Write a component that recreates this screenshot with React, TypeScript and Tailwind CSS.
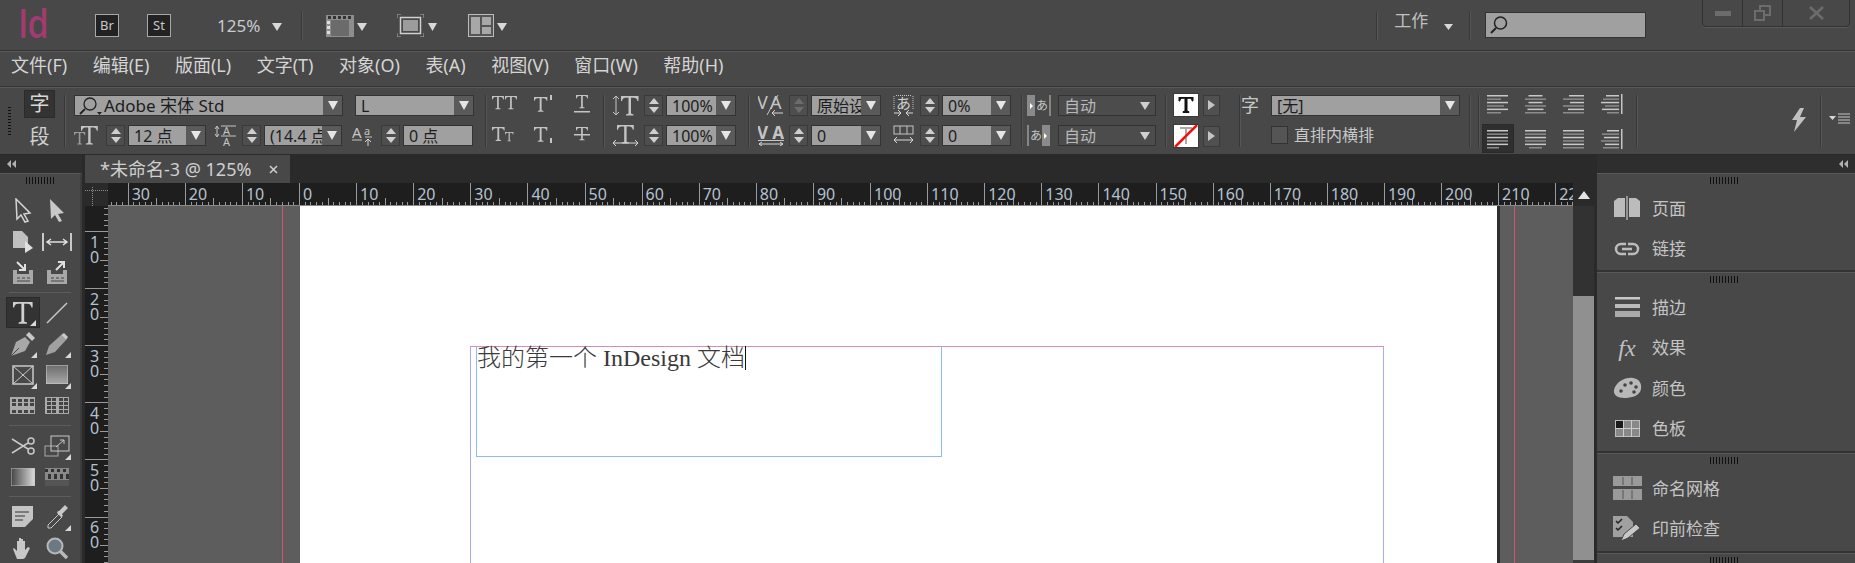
import type { ReactNode } from 'react'

// Gripper made of short dark bars, shared by every docked panel
function Gripper() {
  return (
    <svg width="28" height="7" className="block">
      {Array.from({ length: 10 }, (_, i) => (
        <rect key={i} x={i * 3} y="0" width="1" height="7" fill="#111" />
      ))}
    </svg>
  )
}

function Caret({ className = '', color = '#d8d8d8', w = 10, h = 8 }: { className?: string; color?: string; w?: number; h?: number }) {
  return (
    <svg width={w} height={h} viewBox="0 0 10 8" className={`block shrink-0 ${className}`} preserveAspectRatio="none">
      <path d="M0 0h10L5 8z" fill={color} />
    </svg>
  )
}

function Divider({ className = '' }: { className?: string }) {
  return <div className={`w-px shrink-0 bg-[#383838] border-r border-[#565656] box-content ${className}`} />
}

function Spinner({ dim = false, className = '' }: { dim?: boolean; className?: string }) {
  const c = dim ? '#6c6c6c' : '#cfcfcf'
  return (
    <div className={`w-[19px] h-[21px] shrink-0 flex flex-col items-center justify-center gap-[3px] bg-[#4e4e4e] border border-[#3a3a3a] ${className}`}>
      <svg width="10" height="6" className="block"><path d="M0 6L5 0l5 6z" fill={c} /></svg>
      <svg width="10" height="6" className="block"><path d="M0 0h10L5 6z" fill={c} /></svg>
    </div>
  )
}

function Field({ text, className = '', arrowW = 19, mono = false }: { text?: string; className?: string; arrowW?: number; mono?: boolean }) {
  return (
    <div className={`h-[21px] flex shrink-0 border border-[#333] ${className}`}>
      <div className="flex-1 min-w-0 bg-[#a0a0a0] overflow-hidden whitespace-nowrap text-[#1d1d1d] text-[16px] leading-[20px] pl-[5px]">
        {text}
      </div>
      {!mono && (
        <div className="bg-[#5a5a5a] flex items-center justify-center shrink-0" style={{ width: arrowW }}>
          <Caret color="#e6e6e6" w={10} h={9} />
        </div>
      )}
    </div>
  )
}

function DarkSelect({ text, className = '' }: { text: string; className?: string }) {
  return (
    <div className={`h-[21px] flex items-center justify-between shrink-0 bg-[#4c4c4c] border border-[#333] text-[#b8b8b8] text-[16px] pl-[5px] pr-[5px] ${className}`}>
      <span>{text}</span>
      <Caret color="#cfcfcf" w={10} h={8} />
    </div>
  )
}

function Glyph({ w, h = 21, children, className = '' }: { w: number; h?: number; children: ReactNode; className?: string }) {
  return (
    <svg width={w} height={h} viewBox={`0 0 ${w} ${h}`} className={`block shrink-0 ${className}`} fill="none">
      {children}
    </svg>
  )
}

// Serif "T" used all over the type controls
function SerifT({ x, y, s = 1, fill = '#c4c4c4', bold = false }: { x: number; y: number; s?: number; fill?: string; bold?: boolean }) {
  return (
    <path
      transform={`translate(${x} ${y}) scale(${s})`}
      d="M0 0h14v4h-.8c-.3-1.500-1-2.700-3-2.700H8V14l2 .7v.8H4v-.8l2-.7V1.300H3.800c-2 0-2.700 1.200-3 2.700H0z"
      fill={fill}
      stroke={bold ? fill : 'none'}
      strokeWidth={bold ? 1 : 0}
    />
  )
}

function AlignIcon({ kind }: { kind: string }) {
  const rows =
    kind === 'l' ? [21, 14, 21, 17, 21, 14]
    : kind === 'c' ? [14, 21, 14, 21, 16, 21]
    : kind === 'r' ? [15, 21, 14, 21, 16, 21]
    : kind === 'j' ? [21, 21, 21, 21, 21, 12]
    : kind === 'jc' ? [21, 21, 21, 21, 21, 13]
    : [21, 21, 21, 21, 21, 21]
  const isTowards = kind === 'sp' || kind === 'sr'
  return (
    <svg width="22" height="20" className="block shrink-0">
      {rows.map((w, i) => {
        const wide = isTowards ? (kind === 'sp' ? [13, 16, 18, 14, 17, 12][i] : [12, 17, 15, 18, 14, 16][i]) : w
        const x = isTowards ? 18 - wide : kind === 'c' || kind === 'jc' ? (21 - wide) / 2 : kind === 'r' ? 21 - wide : 0
        return <rect key={i} x={x} y={i * 3.4 + 1} width={wide} height="1.500" fill={i % 2 ? '#8c8c8c' : '#c8c8c8'} />
      })}
      {isTowards && <rect x="20" y="0" width="1.500" height="20" fill="#c4c4c4" />}
    </svg>
  )
}

function TopBar() {
  return (
    <div className="h-[51px] shrink-0 flex border-b border-[#333] shadow-[0_1px_0_#5a5a5a] relative">
      <div className="ml-[18px] mt-[2px] w-[30px] h-[44px] text-[#a33a70] text-[40px] leading-[42px] font-['Open_Sans',sans-serif] font-semibold tracking-[-1px] scale-x-[0.85] origin-left">
        Id
      </div>
      <div className="ml-[47px] mt-[14px] w-[24px] h-[23px] border border-[#a8a8a8] bg-[#222] text-[#c8c8c8] text-[13px] leading-[21px] text-center">Br</div>
      <div className="ml-[28px] mt-[14px] w-[24px] h-[23px] border border-[#a8a8a8] bg-[#222] text-[#c8c8c8] text-[13px] leading-[21px] text-center">St</div>
      <div className="ml-[46px] mt-[13px] text-[#c8ccd0] text-[17px] leading-[26px]">125%</div>
      <Caret className="ml-[12px] mt-[23px]" />
      <Divider className="ml-[19px] mt-[11px] h-[29px]" />
      {/* view options */}
      <Glyph w={28} h={23} className="ml-[23px] mt-[14px]">
        <rect x="0" y="1" width="28" height="22" fill="#8e8e8e" />
        <rect x="5" y="6" width="18" height="16" fill="#6b6b6b" />
        {[2, 7, 12, 17, 22].map((x) => <rect key={x} x={x} y="2" width="3" height="3" fill="#333" />)}
        {[7, 12, 17].map((y) => <rect key={y} x="1" y={y} width="3" height="3" fill="#ddd" />)}
      </Glyph>
      <Caret className="ml-[3px] mt-[23px]" />
      <Glyph w={27} h={23} className="ml-[30px] mt-[14px]">
        <rect x="3.500" y="3.500" width="20" height="16" stroke="#cfcfcf" strokeWidth="1.500" />
        <rect x="6" y="6" width="15" height="11" fill="#9c9c9c" />
        <path d="M0 4V0h4M23 0h4v4M27 19v4h-4M4 23H0v-4" stroke="#aaa" />
      </Glyph>
      <Caret className="ml-[4px] mt-[23px]" w={9} />
      <Glyph w={26} h={23} className="ml-[31px] mt-[14px]">
        <rect x="0.500" y="0.500" width="25" height="22" fill="#555" stroke="#bbb" />
        <rect x="3" y="3" width="9" height="17" fill="#a8a8a8" />
        <rect x="14" y="3" width="9" height="8" fill="#a8a8a8" />
        <rect x="14" y="13" width="9" height="7" fill="#a8a8a8" />
      </Glyph>
      <Caret className="ml-[3px] mt-[23px]" />

      <Divider className="ml-[869px] mt-[11px] h-[29px]" />
      <div className="ml-[16px] mt-[9px] text-[#c0c0c0] text-[17px] leading-[24px]">工作</div>
      <Caret className="ml-[16px] mt-[24px]" w={9} h={6} />
      <Divider className="ml-[16px] mt-[11px] h-[29px]" />
      <div className="ml-[14px] mt-[12px] w-[161px] h-[26px] bg-[#a0a0a0] border border-[#333] flex items-center pl-[3px]">
        <Glyph w={20} h={20}>
          <circle cx="11.500" cy="8" r="6" stroke="#222" strokeWidth="1.500" />
          <path d="M7 13l-5 5" stroke="#222" strokeWidth="2" />
        </Glyph>
      </div>

      {/* window buttons */}
      <div className="ml-[56px] w-[148px] h-[27px] flex border border-t-0 border-[#333] rounded-b-[4px] shadow-[0_1px_0_#5a5a5a]">
        <div className="w-[40px] flex items-center justify-center border-r border-[#333]">
          <div className="w-[16px] h-[5px] bg-[#6c6c6c]" />
        </div>
        <div className="w-[40px] flex items-center justify-center border-r border-[#333]">
          <Glyph w={17} h={16}>
            <rect x="6" y="1" width="10" height="9" stroke="#6c6c6c" strokeWidth="2" />
            <rect x="1" y="6" width="9" height="9" fill="#484848" stroke="#6c6c6c" strokeWidth="2" />
          </Glyph>
        </div>
        <div className="flex-1 flex items-center justify-center">
          <Glyph w={15} h={14}>
            <path d="M1 1l13 12M14 1L1 13" stroke="#6c6c6c" strokeWidth="2.500" />
          </Glyph>
        </div>
      </div>
    </div>
  )
}

const menus = ['文件(F)', '编辑(E)', '版面(L)', '文字(T)', '对象(O)', '表(A)', '视图(V)', '窗口(W)', '帮助(H)']

function MenuBar() {
  return (
    <div className="h-[36px] shrink-0 flex items-center gap-[25.500px] pl-[11px] pb-[6px] border-b border-[#333] text-[#d4d4d4] text-[18px]">
      {menus.map((m) => (
        <span key={m} className="whitespace-nowrap">{m}</span>
      ))}
    </div>
  )
}

function ControlPanel() {
  return (
    <div className="h-[67px] shrink-0 flex pt-[7px] border-t border-[#595959] border-b-0">
      {/* gripper */}
      <svg width="3" height="30" className="block ml-[8px] mt-[12px] shrink-0">
        {Array.from({ length: 10 }, (_, i) => <rect key={i} y={i * 3} width="3" height="1" fill="#111" />)}
      </svg>
      <div className="ml-[13px] w-[31px] shrink-0">
        <div className="-mt-[5px] h-[28px] bg-[#333] border border-[#2b2b2b] text-[#d8d8d8] text-[20px] leading-[25px] text-center">字</div>
        <div className="mt-[5px] h-[28px] text-[#d0d0d0] text-[20px] leading-[28px] text-center">段</div>
      </div>
      <Divider className="ml-[9px] h-[52px]" />

      {/* font family and size */}
      <div className="ml-[8px] w-[400px] shrink-0 flex flex-col gap-[9px]">
        <div className="flex">
          <div className="w-[269px] h-[21px] flex shrink-0 border border-[#333]">
            <div className="flex-1 bg-[#a0a0a0] flex items-center pl-[3px] text-[#1d1d1d] text-[17px] whitespace-nowrap">
              <Glyph w={24} h={20}>
                <circle cx="12" cy="8" r="6" stroke="#222" strokeWidth="1.300" />
                <path d="M7 13l-5 5" stroke="#222" strokeWidth="1.800" />
                <path d="M19 16h5l-2.500 3z" fill="#222" />
              </Glyph>
              <span className="ml-[2px]">Adobe 宋体 Std</span>
            </div>
            <div className="w-[19px] bg-[#5a5a5a] flex items-center justify-center"><Caret color="#e6e6e6" w={10} h={9} /></div>
          </div>
          <Field text="L" className="ml-[12px] w-[119px]" />
        </div>
        <div className="flex">
          <Glyph w={24}>
            <SerifT x={7} y={1} s={1.200} />
            <SerifT x={0} y={7} s={0.800} fill="#9a9a9a" />
          </Glyph>
          <Spinner className="ml-[8px]" />
          <Field text="12 点" className="ml-[3px] w-[78px]" />
          <Glyph w={22} className="ml-[8px]">
            <path d="M7 1h15M7 11h15" stroke="#c4c4c4" />
            <text x="9" y="10" fontSize="11" fill="#c4c4c4" fontFamily="Noto Sans">A</text>
            <text x="9" y="21" fontSize="11" fill="#c4c4c4" fontFamily="Noto Sans">A</text>
            <path d="M3 2v9M1 4l2-3 2 3M1 9l2 3 2-3" stroke="#c4c4c4" />
          </Glyph>
          <Spinner className="ml-[6px]" />
          <Field text="(14.4 点" className="ml-[3px] w-[78px]" />
          <Glyph w={22} className="ml-[10px]">
            <text x="0" y="13" fontSize="15" fill="#c4c4c4" fontFamily="Noto Sans">A</text>
            <text x="12" y="10" fontSize="11" fill="#c4c4c4" fontFamily="Noto Sans">a</text>
            <path d="M0 15h10M13 12h7" stroke="#c4c4c4" />
            <path d="M16 21v-7M13 17l3-3 3 3" stroke="#d8d8d8" />
          </Glyph>
          <Spinner className="ml-[7px]" />
          <Field text="0 点" mono className="ml-[3px] w-[70px]" />
        </div>
      </div>
      <Divider className="ml-[11px] h-[52px]" />

      {/* case, super/subscript */}
      <div className="ml-[5px] w-[96px] shrink-0 flex flex-col gap-[11px]">
        <div className="flex items-start h-[20px]">
          <Glyph w={26} h={18}><SerifT x={0} y={1} s={0.850} /><SerifT x={13} y={1} s={0.850} /></Glyph>
          <Glyph w={20} h={18} className="ml-[16px]"><SerifT x={0} y={2} s={0.950} /><rect x="16" y="0" width="2" height="5" fill="#c4c4c4" /></Glyph>
          <Glyph w={16} h={18} className="ml-[20px]"><SerifT x={2} y={0} s={0.850} /><rect x="0" y="16" width="16" height="1.500" fill="#c4c4c4" /></Glyph>
        </div>
        <div className="flex items-start h-[20px]">
          <Glyph w={26} h={18}><SerifT x={0} y={1} s={0.900} /><SerifT x={13} y={6} s={0.600} /></Glyph>
          <Glyph w={20} h={18} className="ml-[16px]"><SerifT x={0} y={1} s={0.950} /><rect x="16" y="12" width="2" height="5" fill="#c4c4c4" /></Glyph>
          <Glyph w={16} h={18} className="ml-[20px]"><SerifT x={2} y={1} s={0.850} /><rect x="0" y="8" width="16" height="1.500" fill="#c4c4c4" /></Glyph>
        </div>
      </div>
      <Divider className="ml-[15px] h-[52px]" />

      {/* scale */}
      <div className="ml-[7px] w-[123px] shrink-0 flex flex-col gap-[9px]">
        <div className="flex">
          <Glyph w={27}>
            <path d="M4 1v19M1 4l3-3 3 3M1 17l3 3 3-3" stroke="#c4c4c4" />
            <SerifT x={9} y={1} s={1.250} />
          </Glyph>
          <Spinner className="ml-[5px]" />
          <Field text="100%" className="ml-[3px] w-[70px]" />
        </div>
        <div className="flex">
          <Glyph w={27}>
            <SerifT x={5} y={0} s={1.200} />
            <path d="M1 18h25M4 15l-3 3 3 3M23 15l3 3-3 3" stroke="#d8d8d8" />
          </Glyph>
          <Spinner className="ml-[5px]" />
          <Field text="100%" className="ml-[3px] w-[70px]" />
        </div>
      </div>
      <Divider className="ml-[13px] h-[52px]" />

      {/* kerning, tracking */}
      <div className="ml-[8px] w-[254px] shrink-0 flex flex-col gap-[9px]">
        <div className="flex">
          <Glyph w={26}>
            <text x="-1" y="14" fontSize="18" fill="#c4c4c4" fontFamily="Noto Sans">V</text>
            <text x="12" y="14" fontSize="18" fill="#c4c4c4" fontFamily="Noto Sans">A</text>
            <path d="M9 20L20 0" stroke="#c4c4c4" />
            <path d="M25 18H14M17 15l-3 3 3 3" stroke="#d8d8d8" />
          </Glyph>
          <Spinner dim className="ml-[5px]" />
          <Field text="原始设" className="ml-[3px] w-[70px]" />
          <Glyph w={21} className="ml-[12px]">
            <text x="3" y="14" fontSize="15" fill="#d0d0d0" fontFamily="Noto Sans CJK JP">あ</text>
            <path d="M3 0.500h15M1 1v13M20 1v13" stroke="#c4c4c4" strokeDasharray="1 1" />
            <path d="M1 18h7M5 15l3 3-3 3M20 18h-7M16 15l-3 3 3 3" stroke="#d8d8d8" />
          </Glyph>
          <Spinner className="ml-[6px]" />
          <Field text="0%" className="ml-[3px] w-[69px]" />
        </div>
        <div className="flex">
          <Glyph w={26}>
            <text x="-1" y="14" fontSize="17" fontWeight="700" fill="#c4c4c4" fontFamily="Noto Sans" textLength="27">VA</text>
            <rect y="15" width="26" height="1" fill="#c4c4c4" />
            <path d="M1 19h24M4 17l-3 2 3 2M22 17l3 2-3 2" stroke="#d8d8d8" />
          </Glyph>
          <Spinner className="ml-[5px]" />
          <Field text="0" className="ml-[3px] w-[70px]" />
          <Glyph w={21} className="ml-[12px]">
            <rect x="1" y="1" width="19" height="8" stroke="#c4c4c4" />
            <path d="M7 1v8M14 1v8" stroke="#c4c4c4" />
            <path d="M1 15h19M4 12l-3 3 3 3M17 12l3 3-3 3" stroke="#d8d8d8" />
          </Glyph>
          <Spinner className="ml-[6px]" />
          <Field text="0" className="ml-[3px] w-[69px]" />
        </div>
      </div>
      <Divider className="ml-[9px] h-[52px]" />

      {/* kinsoku */}
      <div className="ml-[4px] w-[129px] shrink-0 flex flex-col gap-[9px]">
        <div className="flex">
          <Glyph w={24}>
            <rect x="0" y="0" width="8" height="21" fill="#8a8a8a" />
            <path d="M3 8l3 3-3 3" fill="#fff" />
            <text x="9" y="15" fontSize="12" fill="#c4c4c4" fontFamily="Noto Sans CJK JP">あ</text>
            <path d="M23 0v21" stroke="#c4c4c4" />
          </Glyph>
          <DarkSelect text="自动" className="ml-[7px] w-[98px]" />
        </div>
        <div className="flex">
          <Glyph w={24}>
            <path d="M1 0v21" stroke="#c4c4c4" />
            <text x="3" y="15" fontSize="12" fill="#c4c4c4" fontFamily="Noto Sans CJK JP">あ</text>
            <rect x="15" y="0" width="8" height="21" fill="#8a8a8a" />
            <path d="M17 8l3 3-3 3" fill="#fff" />
          </Glyph>
          <DarkSelect text="自动" className="ml-[7px] w-[98px]" />
        </div>
      </div>
      <Divider className="ml-[9px] h-[52px]" />

      {/* fill and stroke */}
      <div className="ml-[6px] w-[47px] shrink-0 flex flex-col gap-[7px] -mt-[2px]">
        <div className="flex items-center">
          <div className="w-[26px] h-[24px] bg-white flex items-center justify-center border border-[#3a3a3a]">
            <Glyph w={16} h={16}><SerifT x={1} y={0} s={1} fill="#111" bold /></Glyph>
          </div>
          <div className="ml-[4px] w-[17px] h-[21px] bg-[#505050] border border-[#3a3a3a] flex items-center justify-center">
            <svg width="7" height="10" className="block"><path d="M0 0l7 5-7 5z" fill="#c4c4c4" /></svg>
          </div>
        </div>
        <div className="flex items-center">
          <div className="w-[26px] h-[24px] bg-white flex items-center justify-center border border-[#3a3a3a]">
            <Glyph w={24} h={22}>
              <path d="M6 3h12M12 3v16" stroke="#aaa" strokeWidth="2" />
              <path d="M1 22L23 0" stroke="#f01010" strokeWidth="2.500" />
            </Glyph>
          </div>
          <div className="ml-[4px] w-[17px] h-[21px] bg-[#505050] border border-[#3a3a3a] flex items-center justify-center">
            <svg width="7" height="10" className="block"><path d="M0 0l7 5-7 5z" fill="#c4c4c4" /></svg>
          </div>
        </div>
      </div>
      <Divider className="ml-[19px] h-[52px]" />

      {/* character style */}
      <div className="w-[219px] shrink-0 flex flex-col gap-[10px]">
        <div className="flex">
          <span className="w-[18px] text-[#c8c8c8] text-[18px] leading-[20px]">字</span>
          <Field text="[无]" className="ml-[12px] w-[189px]" />
        </div>
        <div className="flex items-center -mt-[1px] ml-[30px]">
          <div className="w-[17px] h-[18px] bg-[#555] border border-[#333]" />
          <span className="ml-[6px] text-[#c8c8c8] text-[16px] leading-[20px] whitespace-nowrap">直排内横排</span>
        </div>
      </div>
      <Divider className="ml-[9px] h-[52px]" />
      <Divider className="ml-[7px] h-[52px]" />

      {/* paragraph alignment */}
      <div className="ml-[2px] w-[152px] shrink-0 grid grid-cols-[38px_38px_38px_38px] gap-y-[12px] -mt-[1px]">
        {['l', 'c', 'r', 'sp'].map((k) => (
          <div key={k} className="w-[32px] h-[20px] flex justify-center"><AlignIcon kind={k} /></div>
        ))}
        {['j', 'jc', 'f', 'sr'].map((k, i) => (
          <div key={k} className={`w-[32px] h-[29px] -mt-[3px] flex items-center justify-center ${i === 0 ? 'bg-[#2f2f2f] border border-[#2a2a2a]' : ''}`}><AlignIcon kind={k} /></div>
        ))}
      </div>
      <Divider className="ml-[2px] h-[52px]" />

      <Glyph w={16} h={24} className="ml-[153px] mt-[13px]">
        <path d="M9 0L1 12h5L3 24l12-15H9l4-9z" fill="#c0c0c0" />
      </Glyph>
      <Divider className="ml-[13px] h-[52px]" />
      <Glyph w={21} h={12} className="ml-[7px] mt-[18px]">
        <path d="M0 3h7L3.500 7z" fill="#d8d8d8" />
        <path d="M9 1h12M9 4h12M9 7h12M9 10h12" stroke="#c4c4c4" />
      </Glyph>
    </div>
  )
}

// Small white triangle that marks a tool with hidden siblings
function Tool({ children, more = false, selected = false }: { children: ReactNode; more?: boolean; selected?: boolean }) {
  return (
    <div className={`relative h-[31px] flex items-center justify-center ${selected ? 'bg-[#333] border border-[#2b2b2b]' : ''}`}>
      {children}
      {more && (
        <svg width="6" height="6" className="absolute right-[3px] bottom-[1px]"><path d="M6 0v6H0z" fill="#d8d8d8" /></svg>
      )}
    </div>
  )
}

const L = '#c8c8c8'

function ToolPanel() {
  const sep = <div className="my-[4px] mx-[3px] h-px bg-[#5c5c5c]" />
  return (
    <div className="w-[82px] shrink-0 flex flex-col">
      <div className="h-[18px] mt-[1px] bg-[#2e2e2e] pl-[7px] flex items-center">
        <svg width="10" height="8" className="block"><path d="M4 0v8L0 4zM9 0v8L5 4z" fill="#b0b0b0" /></svg>
      </div>
      <div className="flex-1 bg-[#484848] border-t border-[#595959] border-r-[2px] border-r-[#3c3c3c] pl-[6px] pr-[6px]">
        <div className="flex justify-center pt-[3px] h-[21px]"><Gripper /></div>
        <div className="grid grid-cols-2 gap-x-[1px]">
          <Tool><Glyph w={18} h={25}><path d="M2 1l14 14-6 1 4 7-3 1-4-7-4 4z" stroke="#d4d4d4" strokeWidth="1.500" /></Glyph></Tool>
          <Tool><Glyph w={16} h={25}><path d="M1 1l14 14-6 1 4 7-3 1-4-7-4 4z" fill={L} /></Glyph></Tool>
          <Tool><Glyph w={22} h={24}><path d="M1 1h9l6 6v11H1z" fill="#c0c0c0" /><path d="M13 11l8 7-8 5z" fill="#e0e0e0" /></Glyph></Tool>
          <Tool><Glyph w={30} h={20}><path d="M1 1v18M29 1v18" stroke={L} strokeWidth="2" /><path d="M6 10h18M9 7l-4 3 4 3M21 7l4 3-4 3" stroke="#e0e0e0" strokeWidth="1.500" /></Glyph></Tool>
          <Tool><Glyph w={22} h={24}><path d="M1 9h4v4h12V9h4v14H1z" fill="#a8a8a8" /><path d="M5 1l8 8M13 3v6H7" stroke="#e0e0e0" strokeWidth="2" /><path d="M5 17h3M10 17h3M15 17h3M5 20h13" stroke="#444" /></Glyph></Tool>
          <Tool><Glyph w={22} h={24}><path d="M1 9h4v4h12V9h4v14H1z" fill="#a8a8a8" /><path d="M10 9l8-8M12 1h6v6" stroke="#e0e0e0" strokeWidth="2" /><path d="M5 17h3M10 17h3M15 17h3M5 20h13" stroke="#444" /></Glyph></Tool>
        </div>
        {sep}
        <div className="grid grid-cols-2 gap-x-[1px]">
          <Tool more selected><Glyph w={20} h={22}><SerifT x={0} y={0} s={1.400} fill="#d0d0d0" /></Glyph></Tool>
          <Tool><Glyph w={22} h={22}><path d="M1 21L21 1" stroke={L} strokeWidth="1.500" /></Glyph></Tool>
          <Tool more><Glyph w={26} h={26}><path d="M1 25l5-14 9-5 5 5-5 9z" fill="#a8a8a8" /><path d="M16 4l3-3 6 6-3 3z" fill={L} /><path d="M1 25l8-8" stroke="#484848" /></Glyph></Tool>
          <Tool more><Glyph w={24} h={24}><path d="M1 23l3-9L16 3l5 5L10 20z" fill="#a0a0a0" /><path d="M16 3l3-2 4 4-2 3z" fill={L} /></Glyph></Tool>
          <Tool more><Glyph w={22} h={20}><rect x="1" y="1" width="20" height="18" stroke={L} strokeWidth="1.500" /><path d="M1 1l20 18M21 1L1 19" stroke={L} /></Glyph></Tool>
          <Tool more><svg width="22" height="19" className="block"><rect width="22" height="19" fill="url(#tool-grad)" stroke="#ccc" /></svg></Tool>
          <Tool><Glyph w={25} h={17}><rect width="25" height="17" fill="#aaa" />{[2, 6, 13].flatMap((y) => [2, 8, 14, 20].map((x) => <rect key={`${x}-${y}`} x={x} y={y} width="4" height="3" fill="#444" />))}</Glyph></Tool>
          <Tool><Glyph w={24} h={17}><rect width="24" height="17" fill="#aaa" />{[2, 6, 10, 14].flatMap((y) => [2, 7, 14, 19].map((x) => <rect key={`${x}-${y}`} x={x} y={y - 1} width="4" height="3" fill="#444" />))}</Glyph></Tool>
        </div>
        {sep}
        <div className="grid grid-cols-2 gap-x-[1px]">
          <Tool><Glyph w={24} h={20}><circle cx="20" cy="5" r="3" stroke={L} strokeWidth="1.500" /><circle cx="20" cy="15" r="3" stroke={L} strokeWidth="1.500" /><path d="M1 3l16 10M1 17L17 7" stroke={L} strokeWidth="1.500" /></Glyph></Tool>
          <Tool more><Glyph w={26} h={22}><rect x="1" y="11" width="13" height="10" stroke="#a8a8a8" /><rect x="7" y="1" width="18" height="15" stroke={L} /><path d="M12 12l8-7M16 5h4v4" stroke={L} /></Glyph></Tool>
          <Tool><svg width="24" height="18" className="block"><rect width="24" height="18" fill="url(#tool-grad-h)" stroke="#bbb" /></svg></Tool>
          <Tool><Glyph w={24} h={18}><rect width="24" height="18" fill="#888" />{[0, 6, 12, 18].map((x) => <rect key={x} x={x} y="1" width="3" height="3" fill="#333" />)}{[3, 9, 15, 21].map((x) => <rect key={x} x={x} y="6" width="3" height="5" fill="#333" />)}<rect y="12" width="24" height="6" fill="#555" /></Glyph></Tool>
        </div>
        {sep}
        <div className="grid grid-cols-2 gap-x-[1px]">
          <Tool><Glyph w={21} h={21}><path d="M0 0h21v13l-8 8H0z" fill="#c4c4c4" /><path d="M3 6h14M3 10h10M3 14h8" stroke="#333" strokeWidth="1.200" /></Glyph></Tool>
          <Tool more><Glyph w={22} h={24}><path d="M2 20L13 9l3 3L5 23H2z" stroke={L} /><path d="M13 6l6-6 3 3-6 6 1 2-2 1-4-4 1-2z" fill={L} /></Glyph></Tool>
          <Tool><Glyph w={24} h={24}><path d="M6 23L2 13l1-1 3 3V5h2v7V2h2v10V3h2v9V5h2v9l3-3 2 1-5 10-2 1z" fill={L} /></Glyph></Tool>
          <Tool><Glyph w={24} h={24}><circle cx="10" cy="10" r="7.500" fill="#6a7a80" stroke="#b8b8b8" strokeWidth="2" /><path d="M15 15l7 7" stroke="#b8b8b8" strokeWidth="3.500" /></Glyph></Tool>
        </div>
      </div>
    </div>
  )
}

const unit = 5.71

function TopRuler() {
  const zero = 191
  const ticks = Array.from({ length: 260 }, (_, i) => i - 34)
  return (
    <svg width="1465" height="23" className="block bg-[#1e1e1e] shrink-0">
      {ticks.map((n) => {
        const x = Math.round(zero + n * unit) + 0.5
        const major = n % 10 === 0
        const mid = n % 5 === 0
        return <path key={n} d={`M${x} ${major ? 0 : mid ? 15 : 19}V22`} stroke="#9a9a9a" />
      })}
      {Array.from({ length: 26 }, (_, i) => (i - 3) * 10).map((n) => (
        <text key={n} x={zero + n * unit + 4} y="17" fontSize="16" fontFamily="Noto Sans" fill="#b4c2d0">
          {Math.abs(n) === 220 ? '22' : Math.abs(n)}
        </text>
      ))}
      <path d="M0 22.500H1465" stroke="#8a8a8a" />
    </svg>
  )
}

function LeftRuler() {
  const ticks = Array.from({ length: 64 }, (_, i) => i - 5)
  return (
    <svg width="23" height="357" className="block bg-[#1e1e1e] shrink-0">
      {ticks.map((n) => {
        const y = Math.round(25 + n * unit) + 0.5
        const major = n % 10 === 0
        const mid = n % 5 === 0
        return <path key={n} d={`M${major ? 0 : mid ? 15 : 19} ${y}H23`} stroke="#9a9a9a" />
      })}
      {[1, 2, 3, 4, 5, 6].map((d, i) => (
        <g key={d} fontSize="16" fontFamily="Noto Sans" fill="#b4c2d0">
          <text x="5" y={42 + i * 57}>{d}</text>
          <text x="5" y={57 + i * 57}>0</text>
        </g>
      ))}
    </svg>
  )
}

function DocumentArea() {
  return (
    <div className="w-[1509px] ml-[3px] shrink-0 flex flex-col">
      <div className="h-[29px] flex bg-[#2a2a2a] pt-[1px] shrink-0">
        <div className="w-[205px] h-[28px] bg-[#484848] flex items-center pl-[15px] text-[#cfcfcf] text-[18px] whitespace-nowrap">
          <span>*未命名-3 @ 125%</span>
          <svg width="9" height="9" className="block ml-[18px]"><path d="M1 1l7 7M8 1L1 8" stroke="#d0d0d0" strokeWidth="1.500" /></svg>
        </div>
      </div>
      <div className="flex-1 flex min-h-0">
        <div className="flex-1 flex flex-col min-w-0">
          <div className="flex">
            <svg width="23" height="23" className="block bg-[#2a2a2a] shrink-0">
              <path d="M0 7.500H23M7.500 4V23" stroke="#8a8a8a" strokeDasharray="1 1" />
            </svg>
            <div className="w-[1465px] shrink-0 overflow-hidden"><TopRuler /></div>
          </div>
          <div className="flex-1 flex min-h-0">
            <LeftRuler />
            <div className="flex-1 flex bg-[#5d5d5d] min-w-0">
              <div className="w-[175px] shrink-0 border-r border-[#c85a6e]" />
              <div className="w-[17px] shrink-0" />
              <div className="w-[1197px] shrink-0 bg-white relative">
                {/* margin guides and the text frame sit on the page */}
                <div className="absolute left-[170px] top-[140px] w-[914px] h-[300px] border-t border-l border-r border-t-[#d88ab8] border-l-[#a9a9ff] border-r-[#a9a9ff]" />
                <div className="absolute left-[176px] top-[140px] w-[466px] h-[111px] border border-t-0 border-[#8cbaff]">
                  <div className="flex h-[24px] items-center text-[24px] leading-[24px] whitespace-nowrap text-[#3a3a3a] font-['Liberation_Serif','Noto_Sans_CJK_SC',serif] font-light">
                    <span>我的第一个 InDesign 文档</span>
                    <span className="w-px h-[24px] bg-[#111]" />
                  </div>
                </div>
              </div>
              <div className="w-[3px] shrink-0 bg-[#2e2e2e]" />
              <div className="w-[15px] shrink-0 border-r border-[#c85a6e]" />
            </div>
          </div>
        </div>
        {/* scroll bar */}
        <div className="w-[21px] shrink-0 flex flex-col">
          <div className="h-[23px] bg-[#2a2a2a] flex items-center justify-center shrink-0">
            <svg width="12" height="8" className="block"><path d="M0 8L6 0l6 8z" fill="#e4e4e4" /></svg>
          </div>
          <div className="h-[90px] bg-[#323232] shrink-0" />
          <div className="flex-1 bg-[#909090]" />
          <div className="h-[3px] bg-[#3c3c3c] shrink-0" />
        </div>
      </div>
    </div>
  )
}

function DockRow({ label, icon }: { label: string; icon: ReactNode }) {
  return (
    <div className="h-[40.500px] flex items-center">
      <div className="w-[30px] ml-[15px] flex justify-center shrink-0">{icon}</div>
      <span className="ml-[10px] text-[#c4c4c4] text-[17px] whitespace-nowrap">{label}</span>
    </div>
  )
}

function DockSection({ rows, className = '' }: { rows: ReactNode; className?: string }) {
  return (
    <div className={`border-b-2 border-[#333] border-t border-t-[#595959] shrink-0 ${className}`}>
      <div className="flex justify-center pt-[3px] h-[14px] pr-[4px]"><Gripper /></div>
      {rows}
    </div>
  )
}

function RightDock() {
  return (
    <div className="w-[258px] ml-[3px] shrink-0 flex flex-col">
      <div className="h-[18px] mt-[1px] bg-[#2e2e2e] flex items-center justify-end pr-[6px] shrink-0">
        <svg width="10" height="8" className="block"><path d="M4 0v8L0 4zM9 0v8L5 4z" fill="#b0b0b0" /></svg>
      </div>
      <div className="flex-1 bg-[#484848] overflow-hidden">
        <DockSection
          className="h-[99px]"
          rows={
            <>
              <DockRow label="页面" icon={<Glyph w={26} h={24}><path d="M0 5l4-3h7v19H0zM26 5l-4-3h-7v19h11z" fill="#bcbcbc" /><path d="M13 0v24" stroke="#ddd" /></Glyph>} />
              <DockRow label="链接" icon={<Glyph w={26} h={16}><path d="M12 3H7a5 5 0 000 10h5M14 3h5a5 5 0 010 10h-5M8 8h10" stroke="#bcbcbc" strokeWidth="2.500" /></Glyph>} />
            </>
          }
        />
        <DockSection
          className="h-[181px]"
          rows={
            <>
              <DockRow label="描边" icon={<Glyph w={25} h={20}><rect width="25" height="2.500" fill="#c8c8c8" /><rect y="7" width="25" height="4" fill="#bbb" /><rect y="14" width="25" height="6" fill="#aaa" /></Glyph>} />
              <DockRow label="效果" icon={<span className="text-[#c0c0c0] text-[24px] leading-[24px] italic font-['Liberation_Serif',serif]">fx</span>} />
              <DockRow label="颜色" icon={<Glyph w={29} h={22}><path d="M1 13C3 5 12 0 20 1c6 1 9 5 8 11-1 7-10 9-17 9C5 21 0 18 1 13z" fill="#b8b8b8" />{[[8, 14], [12, 8], [18, 6], [23, 10], [21, 15]].map(([x, y]) => <circle key={x} cx={x} cy={y} r="1.800" fill="#444" />)}</Glyph>} />
              <DockRow label="色板" icon={<Glyph w={25} h={17}><rect x="0.500" y="0.500" width="24" height="16" fill="#888" stroke="#bbb" /><rect x="1" y="1" width="7" height="7" fill="#1a1a1a" /><path d="M8.500 0v17M16.500 0v17M0 8.500h25" stroke="#ccc" /></Glyph>} />
            </>
          }
        />
        <DockSection
          className="h-[100px]"
          rows={
            <>
              <DockRow label="命名网格" icon={<Glyph w={29} h={24}><rect width="29" height="10" fill="#9a9a9a" /><rect y="13" width="29" height="11" fill="#9a9a9a" /><path d="M10 1v8M19 1v8M10 14v9M19 14v9" stroke="#555" /></Glyph>} />
              <DockRow label="印前检查" icon={<Glyph w={28} h={28}><path d="M0 1h14l6 6v15H0z" fill="#a0a0a0" /><path d="M3 6l2 2 4-4M3 13l2 2 4-4" stroke="#222" strokeWidth="1.500" /><path d="M8 26l3-7 12-10 4 4-12 10z" fill="#c8c8c8" stroke="#484848" /></Glyph>} />
            </>
          }
        />
        <div className="border-t border-[#595959] flex justify-center pt-[3px] pr-[4px]"><Gripper /></div>
      </div>
    </div>
  )
}

export default function App() {
  return (
    <div className="w-[1855px] h-[563px] overflow-hidden flex flex-col bg-[#484848] font-['Noto_Sans','Noto_Sans_CJK_SC',sans-serif]">
      <svg width="0" height="0" className="absolute">
        <defs>
          <linearGradient id="tool-grad" x1="0" y1="0" x2="0" y2="1">
            <stop offset="0" stopColor="#6c6c6c" />
            <stop offset="1" stopColor="#a8a8a8" />
          </linearGradient>
          <linearGradient id="tool-grad-h" x1="0" y1="0" x2="1" y2="0">
            <stop offset="0" stopColor="#444" />
            <stop offset="1" stopColor="#ddd" />
          </linearGradient>
        </defs>
      </svg>
      <TopBar />
      <MenuBar />
      <ControlPanel />
      <div className="flex-1 min-h-0 flex bg-[#2a2a2a]">
        <ToolPanel />
        <DocumentArea />
        <RightDock />
      </div>
    </div>
  )
}
